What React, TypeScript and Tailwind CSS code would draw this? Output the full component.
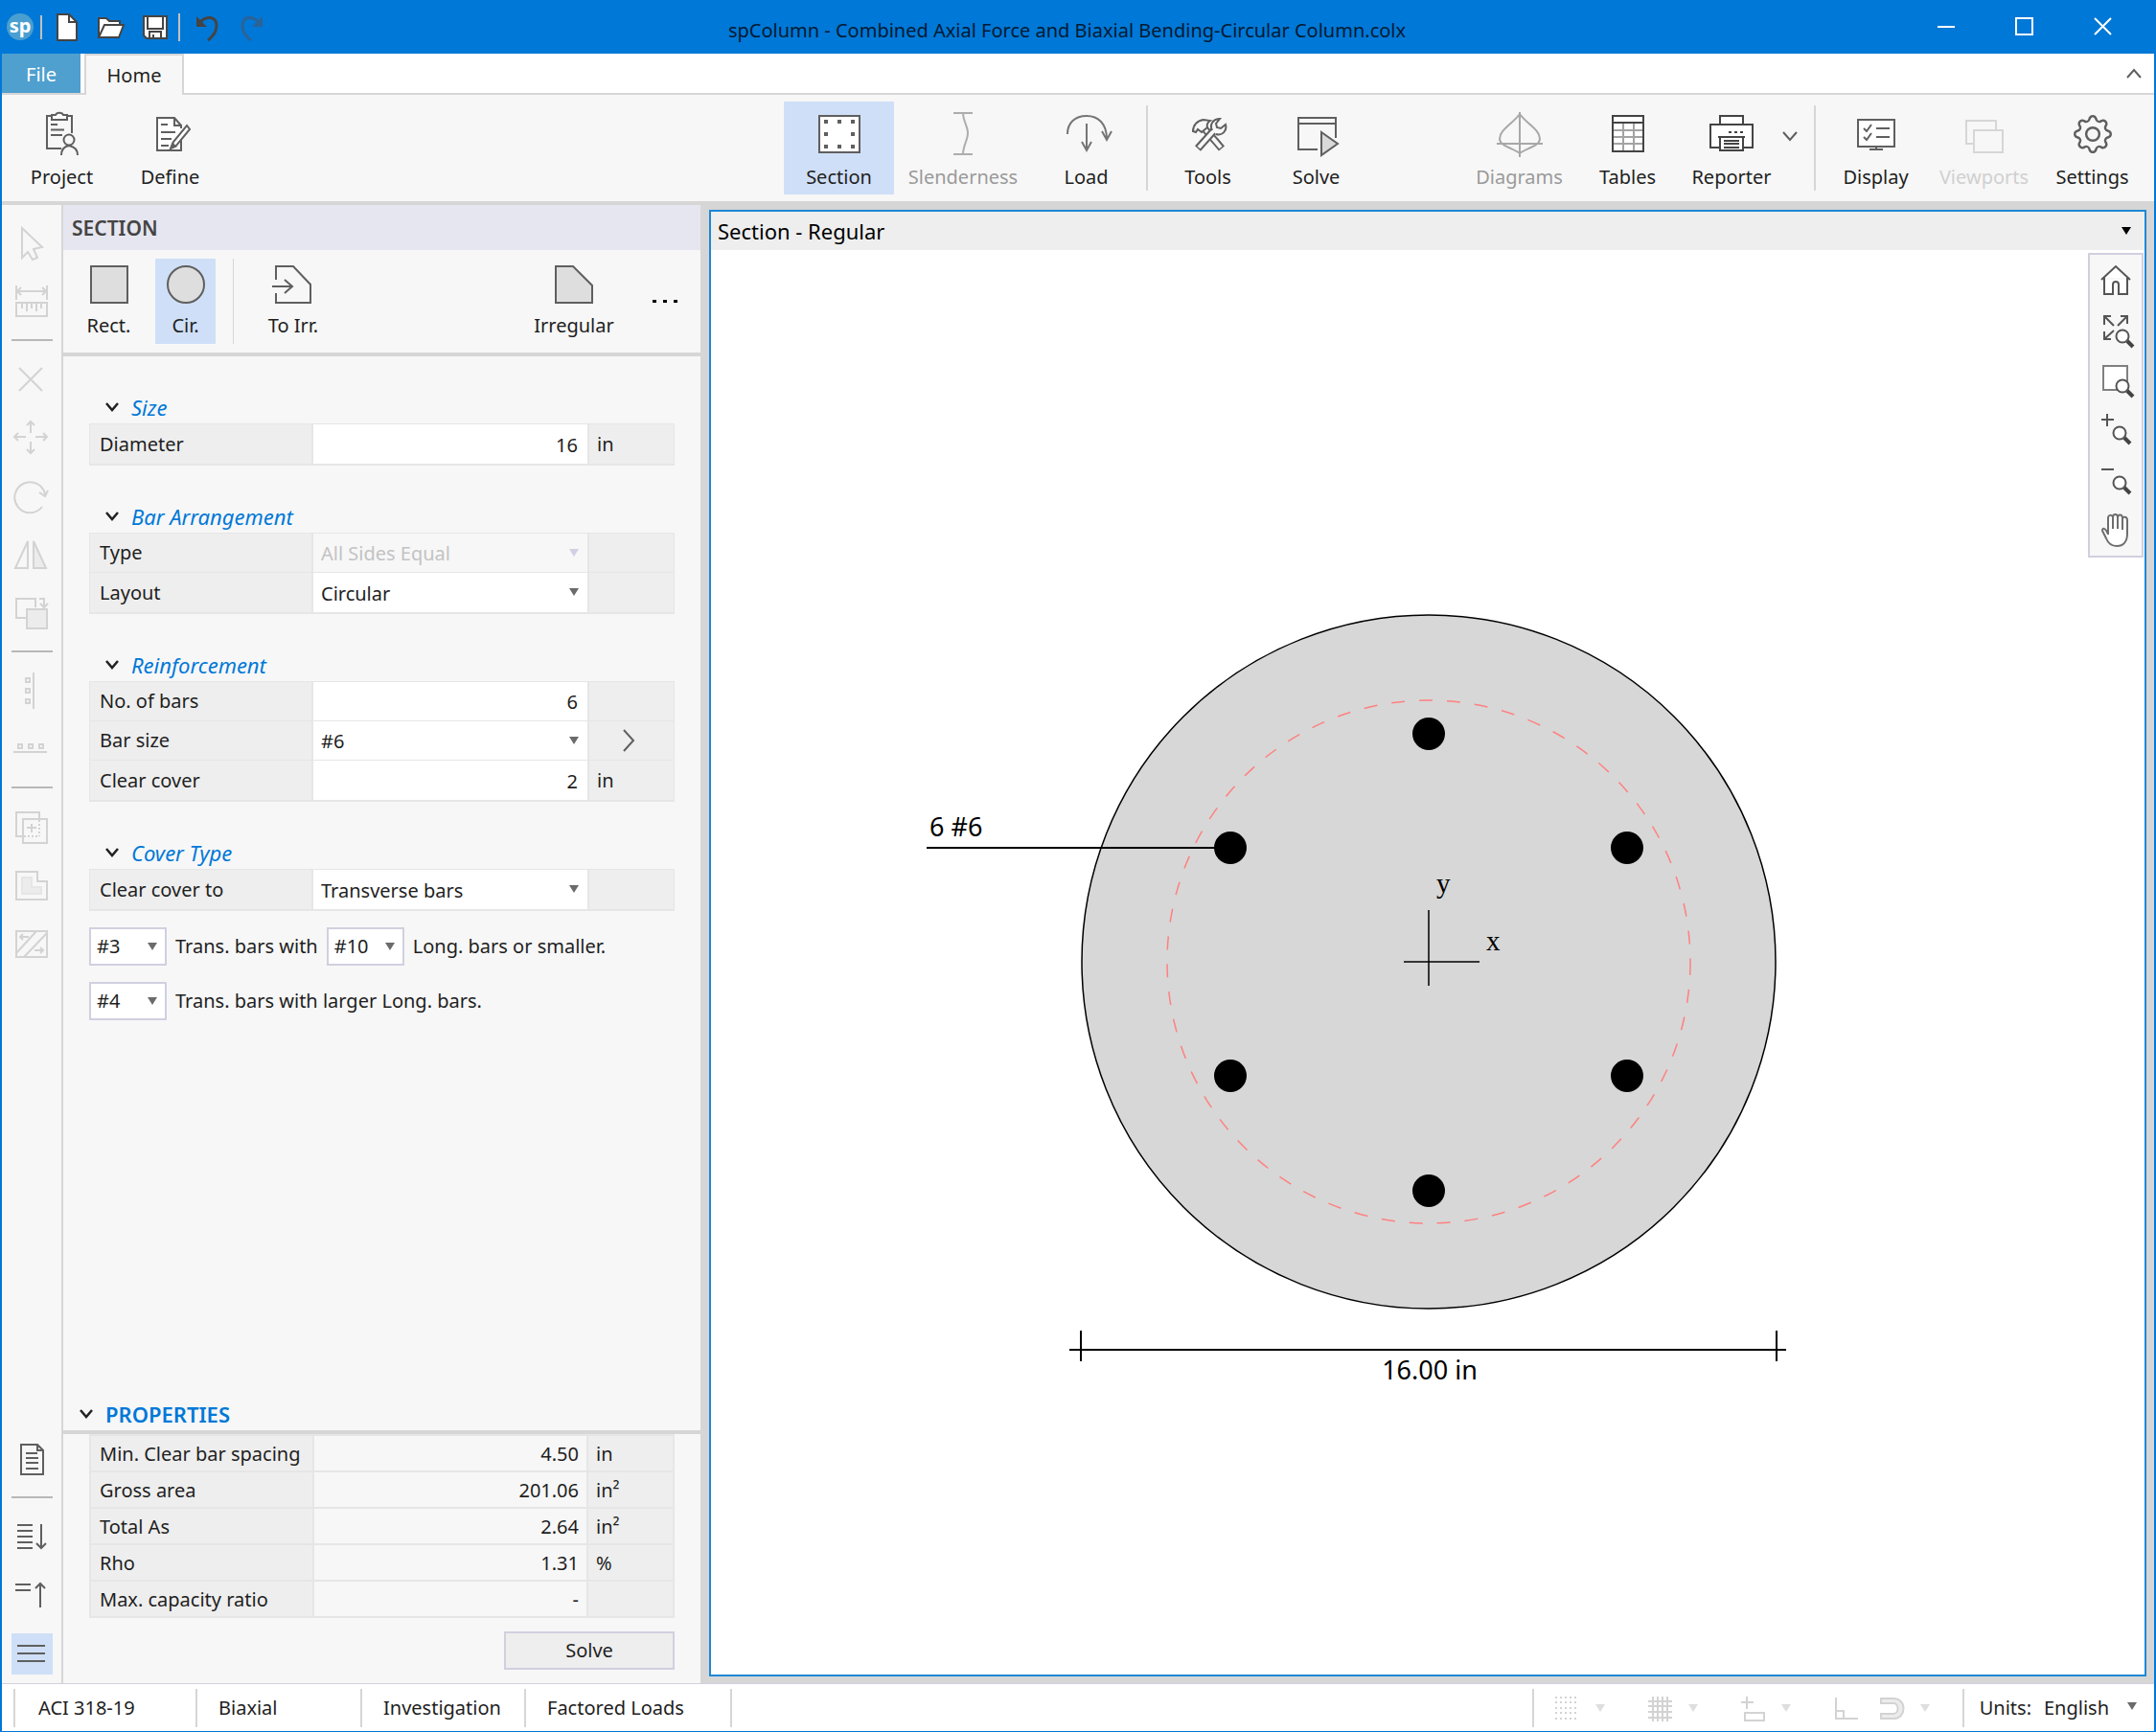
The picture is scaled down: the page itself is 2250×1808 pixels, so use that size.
import { useState } from "react";
import type { ReactNode } from "react";
import { BsGear } from "react-icons/bs";

interface IconProps {
  children: ReactNode;
  color?: string;
  size?: number;
}

function Icon({ children, color = "#5f5f5f", size = 48 }: IconProps) {
  return (
    <svg
      width={size}
      height={size}
      viewBox={`0 0 ${size} ${size}`}
      fill="none"
      stroke={color}
      strokeWidth="2"
      className="shrink-0 overflow-visible"
      aria-hidden="true"
    >
      {children}
    </svg>
  );
}

function Chevron() {
  return (
    <svg width="16" height="16" viewBox="0 0 16 16" fill="none" stroke="#222" strokeWidth="2.500" aria-hidden="true">
      <path d="M2 4l6 7 6-7" />
    </svg>
  );
}

function Caret({ className }: { className: string }) {
  return (
    <svg width="10" height="8" viewBox="0 0 10 8" className={className} aria-hidden="true">
      <path d="M0 0h10L5 8z" fill="currentColor" />
    </svg>
  );
}

const ribbon = {
  project: (
    <Icon>
      <path d="M13 5H8v34h15M29 5h5v18" />
      <path d="M13 9V4h4c1-3 7-3 8 0h4v5z" fill="#fff" />
      <path d="M12 14h7M12 19.500h14M12 25h12" />
      <circle cx="31" cy="30" r="5.500" />
      <path d="M23 46c0-6 3-9 8-10 5 1 9 4 9 10" />
    </Icon>
  ),
  define: (
    <Icon>
      <path d="M35 27v14H10V7h18l7 8v3M28 7v8h7" fill="#fff" />
      <path d="M14 14h7M14 22h15M14 29h11M14 36h8" />
      <path d="M41 15l3 4-14 17-5 2 2-6z" fill="#fff" />
      <path d="M24 39l5-2-3-3z" fill="#5f5f5f" />
    </Icon>
  ),
  section: (
    <Icon>
      <path d="M3 5h42v38H3z" fill="#fff" />
      <path d="M8 11h4M22 11h4M36 11h4M8 24h4M36 24h4M8 37h4M22 37h4M36 37h4" strokeWidth="4" />
    </Icon>
  ),
  slenderness: (
    <Icon color="#adadad">
      <path d="M14 2h20M14 45h20M24 2c0 8 5 14 5 21s-5 13-5 22" />
    </Icon>
  ),
  load: (
    <Icon color="#757575">
      <path d="M4 24C4 12 12 5 24 5s21 8 21 24M24 13v27M19 32l5 9 5-9M40 21l5 9 5-9" />
    </Icon>
  ),
  tools: (
    <Icon>
      <path d="M19 17l19 22" strokeWidth="8" />
      <path d="M19 17l18 21" strokeWidth="4" stroke="#f7f7f7" />
      <path d="M8 21c0-6 4-11 11-12l7 1c-3 2-4 4-3 7l-6 5-4-3-2 3z" fill="#f7f7f7" />
      <path d="M31 19L13 39" strokeWidth="8" />
      <path d="M31 19L14 38" strokeWidth="4" stroke="#f7f7f7" />
      <path d="M28 20c-3-6 1-12 8-12l-4 5 1 4 4 1 5-4c2 7-4 12-10 10" fill="#f7f7f7" />
    </Icon>
  ),
  solve: (
    <Icon>
      <path d="M25 40H5V7h39v21M5 13h39" />
      <path d="M29 22l17 12-17 12z" fill="#d9d9d9" />
    </Icon>
  ),
  diagrams: (
    <Icon color="#a8a8a8">
      <path d="M24 3C17 13 3 19 3 29c0 7 14 10 21 15 7-5 21-8 21-15C45 19 31 13 24 3M24 1v47M0 34h48" />
    </Icon>
  ),
  tables: (
    <Icon>
      <path d="M8 5h32v37H8z" fill="#fff" />
      <path d="M19 13v28M30 13v28M9 20h30M9 27h30M9 34h30" stroke="#a3a3a3" />
      <path d="M8 5h32v37H8zM8 12h32" stroke="#444" />
    </Icon>
  ),
  reporter: (
    <Icon color="#444">
      <path d="M12 13V5h24v8" fill="#fff" />
      <path d="M12 38H2V14h44v24H36" fill="#fff" />
      <path d="M12 27v14h24V27M10 27h28M16 31h16M16 34h16M16 38h16" />
      <path d="M21 22h3M27 22h3M33 22h3" />
    </Icon>
  ),
  display: (
    <Icon>
      <path d="M5 9h38v28H5z" fill="#fff" />
      <path d="M24 37v3M17 40h14M24 18h14M24 27h14M11 18l3 3 5-7M11 27l3 3 5-7" />
    </Icon>
  ),
  viewports: (
    <Icon color="#d6d6d6">
      <path d="M13 34H5V10h31v10" />
      <path d="M13 20h30v23H13z" />
    </Icon>
  ),
  settings: <BsGear className="m-1 size-10 text-[#5f5f5f]" aria-hidden="true" />,
};

interface RibbonButtonProps {
  icon: ReactNode;
  label: string;
  width?: string;
  tone?: string;
  active?: boolean;
  disabled?: boolean;
}

function RibbonButton({ icon, label, width = "w-[113px]", tone = "text-[#1e1e1e]", active, disabled }: RibbonButtonProps) {
  return (
    <button
      type="button"
      disabled={disabled}
      className={`flex h-[97px] shrink-0 flex-col items-center gap-[7px] pt-2.5 ${width} ${tone} ${active ? "bg-[#cfdff7]" : ""}`}
    >
      {icon}
      <span>{label}</span>
    </button>
  );
}

function RibbonDivider({ className = "mx-1.5" }: { className?: string }) {
  return <span className={`mt-1 h-[89px] w-0.5 shrink-0 bg-[#d6d6d6] ${className}`} />;
}

const editTools: { label: string; icon?: ReactNode }[] = [
  { label: "Select", icon: <path d="M12 6v31l6-6 5 8 5-2-4-9 9-2z" /> },
  {
    label: "Measure",
    icon: <path d="M6 5v15M38 5v15M6 11h32M11 7l-4 4 4 4M33 7l4 4-4 4M6 23h32v14H6zM12 23v6M17 23v9M22 23v6M27 23v9M32 23v6" />,
  },
  { label: "divider-1" },
  { label: "Delete", icon: <path d="M9 10l24 24M33 10L9 34" /> },
  {
    label: "Move",
    icon: <path d="M21 17V5M21 26v12M16 21H4M26 21h12M17 9l4-4 4 4M17 34l4 4 4-4M8 17l-4 4 4 4M34 17l4 4-4 4" />,
  },
  { label: "Rotate", icon: <path d="M33 33A16 16 0 1 1 36 20M30 18l6 4 3-6" /> },
  {
    label: "Mirror",
    icon: (
      <>
        <path d="M18 8v28H5z" />
        <path d="M24 8v28h13z" fill="#ececec" />
      </>
    ),
  },
  {
    label: "Duplicate",
    icon: (
      <>
        <path d="M16 27H6V7h20v9M30 7h5v9M31 12l4 4 4-4" />
        <path d="M17 18h21v20H17z" fill="#ececec" />
      </>
    ),
  },
  { label: "divider-2" },
  { label: "Align vertical", icon: <path d="M24 3v38M16 9h4v4h-4zM16 20h4v4h-4zM16 31h4v4h-4z" /> },
  { label: "Align horizontal", icon: <path d="M3 25h35M8 17h4v4H8zM19 17h4v4h-4zM30 17h4v4h-4z" /> },
  { label: "divider-3" },
  {
    label: "Merge",
    icon: (
      <>
        <path d="M13 32H6V7h24v7M13 14h25v25H13zM22 19v9M17 23h10" />
        <path d="M30 15v17M14 32h16" strokeDasharray="2 2" />
      </>
    ),
  },
  {
    label: "Offset",
    icon: (
      <>
        <path d="M6 8h22v10h10v19H6z" />
        <path d="M12 14h10v10h10v7H12z" fill="#ececec" stroke="#e6e6e6" />
      </>
    ),
  },
  { label: "Trim", icon: <path d="M6 9h32v27H6zM6 32L27 9M14 36L38 11M10 15h9M13 12l-3 3 3 3M25 29h9M31 26l3 3-3 3" /> },
];

const viewTools = [
  { label: "Report", icon: <path d="M11 7h17l6 6v25H11zM28 7v6h6M16 16h12M16 21h13M16 26h13M16 32h13" /> },
  { label: "divider-4" },
  { label: "Expand list", icon: <path d="M7 10h16M7 16h16M7 22h16M7 28h16M7 34h16M32 9v25M27 29l5 5 5-5" /> },
  { label: "Collapse list", icon: <path d="M5 11h16M5 17h16M31 35V10M26 15l5-5 5 5" /> },
];

function SideButton({ label, icon, disabled }: { label: string; icon?: ReactNode; disabled?: boolean }) {
  if (!icon) return <span className="my-[9px] h-0.5 w-[43px] bg-[#b8b8b8]" />;
  return (
    <button type="button" aria-label={label} disabled={disabled} className="flex h-[61px] w-[43px] items-center justify-center">
      <Icon size={44} color={disabled ? "#d3d3d3" : "#5f5f5f"}>
        {icon}
      </Icon>
    </button>
  );
}

function Group({ title, children }: { title: string; children: ReactNode }) {
  const [open, setOpen] = useState(true);
  return (
    <section className="pt-9">
      <button
        type="button"
        aria-expanded={open}
        onClick={() => setOpen(!open)}
        className="flex h-[34px] items-center gap-3 pl-4 text-[22px] text-[#0078d7] italic"
      >
        <Chevron />
        {title}
      </button>
      {open && <div className="border border-b-2 border-[#e6e6e6]">{children}</div>}
    </section>
  );
}

interface RowProps {
  id: string;
  label: string;
  unit?: ReactNode;
  children: ReactNode;
}

function Row({ id, label, unit, children }: RowProps) {
  return (
    <div className="grid h-[41px] grid-cols-[233px_1fr_90px] border-b border-[#e6e6e6] bg-[#eeeeee] last:border-b-0">
      <label htmlFor={id} className="flex items-center border-r-2 border-[#e6e6e6] pl-2.5">
        {label}
      </label>
      {children}
      <div className="flex items-center border-l-2 border-[#e6e6e6] pl-2">{unit}</div>
    </div>
  );
}

function NumberBox({ id, value }: { id: string; value: string }) {
  return <input id={id} type="text" defaultValue={value} className="w-full min-w-0 bg-white pt-0.5 pr-2.5 text-right outline-none" />;
}

function SelectBox({ id, value, disabled }: { id: string; value: string; disabled?: boolean }) {
  return (
    <div className="relative">
      <select
        id={id}
        defaultValue={value}
        disabled={disabled}
        className="h-full w-full appearance-none bg-white pt-0.5 pl-2 outline-none disabled:bg-[#f7f7f7] disabled:text-[#c3c3c3] disabled:opacity-100"
      >
        <option>{value}</option>
      </select>
      <Caret className={`pointer-events-none absolute top-4 right-[9px] ${disabled ? "text-[#d0d0e4]" : "text-[#6b6b6b]"}`} />
    </div>
  );
}

function SmallSelect({ label, value }: { label: string; value: string }) {
  return (
    <div className="relative h-10 w-[81px] shrink-0 border-2 border-[#d0d0e0]">
      <select aria-label={label} defaultValue={value} className="h-full w-full appearance-none bg-white pl-1.5 outline-none">
        <option>{value}</option>
      </select>
      <Caret className="pointer-events-none absolute top-3.5 right-2 text-[#6b6b6b]" />
    </div>
  );
}

const properties: { name: string; value: string; unit: ReactNode }[] = [
  { name: "Min. Clear bar spacing", value: "4.50", unit: "in" },
  { name: "Gross area", value: "201.06", unit: "in²" },
  { name: "Total As", value: "2.64", unit: "in²" },
  { name: "Rho", value: "1.31", unit: "%" },
  { name: "Max. capacity ratio", value: "-", unit: "" },
];

function SectionPanel() {
  return (
    <aside className="flex w-[665px] shrink-0 flex-col bg-[#f7f7f7]">
      <h2 className="flex h-[47px] shrink-0 items-center bg-[#e6e6f0] pl-[9px] text-[21px] font-semibold text-[#444]">SECTION</h2>
      <div className="flex h-[111px] shrink-0 items-start border-b-4 border-[#d6d6d6] pt-[9px] pl-4">
        <button type="button" className="flex h-[89px] w-[63px] flex-col items-center gap-[9px] pt-[7px]">
          <Icon size={40}>
            <path d="M1 1h38v38H1z" fill="#dedede" />
          </Icon>
          Rect.
        </button>
        <button type="button" className="ml-[17px] flex h-[89px] w-[63px] flex-col items-center gap-[9px] bg-[#cfdff7] pt-[7px]">
          <Icon size={40}>
            <circle cx="20" cy="20" r="19" fill="#dedede" />
          </Icon>
          Cir.
        </button>
        <span className="ml-[18px] h-[89px] w-px bg-[#d6d6d6]" />
        <button type="button" className="ml-6 flex h-[89px] w-[76px] flex-col items-center gap-[9px] pt-[7px]">
          <Icon size={40}>
            <path d="M2 15V1h18l18 19v19H2V29M-2 22h21M11 15l8 7-8 7" />
          </Icon>
          To Irr.
        </button>
        <button type="button" className="mr-[33px] ml-auto flex h-[89px] w-[90px] flex-col items-center gap-[9px] pt-[7px]">
          <Icon size={40}>
            <path d="M1 1h18l20 20v18H1z" fill="#dedede" />
          </Icon>
          Irregular
        </button>
        <button type="button" aria-label="More shapes" className="mr-5 flex h-[88px] items-center gap-[7px] px-1">
          <span className="h-[3px] w-1 bg-black" />
          <span className="h-[3px] w-1 bg-black" />
          <span className="h-[3px] w-1 bg-black" />
        </button>
      </div>

      <form className="flex-1 px-[27px]" onSubmit={(e) => e.preventDefault()}>
        <Group title="Size">
          <Row id="diameter" label="Diameter" unit="in">
            <NumberBox id="diameter" value="16" />
          </Row>
        </Group>
        <Group title="Bar Arrangement">
          <Row id="type" label="Type">
            <SelectBox id="type" value="All Sides Equal" disabled />
          </Row>
          <Row id="layout" label="Layout">
            <SelectBox id="layout" value="Circular" />
          </Row>
        </Group>
        <Group title="Reinforcement">
          <Row id="bars" label="No. of bars">
            <NumberBox id="bars" value="6" />
          </Row>
          <Row
            id="barsize"
            label="Bar size"
            unit={
              <button type="button" aria-label="Bar size details" className="ml-6">
                <Icon size={24}>
                  <path d="M4 1l10 11L4 23" />
                </Icon>
              </button>
            }
          >
            <SelectBox id="barsize" value="#6" />
          </Row>
          <Row id="cover" label="Clear cover" unit="in">
            <NumberBox id="cover" value="2" />
          </Row>
        </Group>
        <Group title="Cover Type">
          <Row id="coverto" label="Clear cover to">
            <SelectBox id="coverto" value="Transverse bars" />
          </Row>
        </Group>
        <div className="mt-[17px] flex items-center gap-[9px]">
          <SmallSelect label="Transverse bar size" value="#3" />
          <span>Trans. bars with</span>
          <SmallSelect label="Longitudinal bar size" value="#10" />
          <span>Long. bars or smaller.</span>
        </div>
        <div className="mt-[17px] flex items-center gap-[9px]">
          <SmallSelect label="Transverse bar size for larger bars" value="#4" />
          <span>Trans. bars with larger Long. bars.</span>
        </div>
      </form>

      <button
        type="button"
        aria-expanded="true"
        className="flex h-[38px] shrink-0 items-center gap-3 border-b-4 border-[#d6d6d6] pl-4 text-[22px] font-semibold text-[#0078d7]"
      >
        <Chevron />
        PROPERTIES
      </button>
      <div className="px-[27px] pb-[14px]">
        <table className="w-full table-fixed border-collapse">
          <tbody>
            {properties.map((p) => (
              <tr key={p.name} className="h-[38px]">
                <th scope="row" className="w-[233px] border-2 border-[#e6e6e6] bg-[#eeeeee] pt-0.5 pl-[9px] text-left font-normal whitespace-nowrap">
                  {p.name}
                </th>
                <td className="border-2 border-[#e6e6e6] pt-0.5 pr-2 text-right">{p.value}</td>
                <td className="w-[90px] border-2 border-[#e6e6e6] bg-[#eeeeee] pt-0.5 pl-2">{p.unit}</td>
              </tr>
            ))}
          </tbody>
        </table>
        <button type="button" className="mt-[14px] ml-auto block h-10 w-[178px] border-2 border-[#d0d0e0] bg-[#eeeeee]">
          Solve
        </button>
      </div>
    </aside>
  );
}

const bars = [
  [749, 505],
  [956, 624],
  [956, 862],
  [749, 982],
  [542, 862],
  [542, 624],
];

function SectionDrawing() {
  return (
    <svg viewBox="0 0 1496 1487" className="h-full w-full" role="img" aria-label="Circular column section">
      <circle cx="749" cy="743" r="362" fill="#d7d7d7" stroke="#000" strokeWidth="1.500" />
      <circle cx="749" cy="743" r="273" fill="none" stroke="#ff8080" strokeWidth="1.500" strokeDasharray="14 15" />
      {bars.map(([x, y]) => (
        <circle key={`${x}-${y}`} cx={x} cy={y} r="17" />
      ))}
      <path d="M225 624h317M374 1148h748M386 1128v32M1112 1128v32" stroke="#000" strokeWidth="2" />
      <path d="M723 743h79M749 689v79" stroke="#000" strokeWidth="1.500" />
      <text x="228" y="612" fontSize="27">
        6 #6
      </text>
      <text x="750" y="1179" fontSize="27" textAnchor="middle">
        16.00 in
      </text>
      <g className="font-['Liberation_Serif',serif]" fontSize="29">
        <text x="757" y="671">
          y
        </text>
        <text x="809" y="731">
          x
        </text>
      </g>
    </svg>
  );
}

// magnifier shared by the zoom buttons, its lens centred on (x, y)
function Lens({ x, y }: { x: number; y: number }) {
  return (
    <g transform={`translate(${x} ${y})`}>
      <circle r="6.500" fill="#fff" />
      <path d="M5 5l6 6" strokeWidth="4" stroke="#444" />
    </g>
  );
}

const zoomTools = [
  { label: "Home", icon: <path d="M2 17L17 3l15 14M5 15v17h9V22c0-4 6-4 6 0v10h9V15" fill="#fff" /> },
  {
    label: "Zoom extents",
    icon: (
      <>
        <path d="M5 12V3h7M5 3l10 10M22 3h7v8M29 3L19 13M5 19v8h7M5 27l10-9" />
        <Lens x={24} y={24} />
      </>
    ),
  },
  {
    label: "Zoom window",
    icon: (
      <>
        <path d="M4 3h25v25H4z" fill="#fff" stroke="#808080" />
        <Lens x={24} y={24} />
      </>
    ),
  },
  {
    label: "Zoom in",
    icon: (
      <>
        <path d="M2 7h13M8 1v13" />
        <Lens x={21} y={21} />
      </>
    ),
  },
  {
    label: "Zoom out",
    icon: (
      <>
        <path d="M2 7h13" />
        <Lens x={21} y={21} />
      </>
    ),
  },
  {
    label: "Pan",
    icon: (
      <>
        <path
          d="M9 23V6c0-4 4-4 5-1 0-4 5-4 5 0 1-4 5-3 5 1 1-2 5-2 5 2v14c0 8-4 13-11 13-6 0-9-3-11-8l-4-8c0-3 3-4 6 4z"
          fill="#fff"
          stroke="#6e6e6e"
        />
        <path d="M14 5v12M19 5v12M24 6v12" stroke="#6e6e6e" />
      </>
    ),
  },
];

function Canvas() {
  return (
    <main className="flex min-w-0 flex-1 flex-col border-2 border-[#1e88d6] bg-white">
      <header className="flex h-10 shrink-0 items-center justify-between bg-[#eeeeee] pr-3.5 pl-[7px] text-[22px] text-black">
        Section - Regular
        <button type="button" aria-label="View options">
          <Caret className="text-black" />
        </button>
      </header>
      <div className="relative min-h-0 flex-1">
        <SectionDrawing />
        <div className="absolute top-[3px] right-px flex w-[58px] flex-col items-center border-2 border-[#d0d0e0] bg-[#f7f7f7] pr-px pb-0.5">
          {zoomTools.map((t) => (
            <button key={t.label} type="button" aria-label={t.label} className="flex h-[52px] items-center justify-center">
              <Icon size={34} color="#555">
                {t.icon}
              </Icon>
            </button>
          ))}
        </div>
      </div>
    </main>
  );
}

function TitleBar() {
  return (
    <header className="flex h-14 shrink-0 items-center bg-[#0078d7]">
      <div className="flex flex-1 items-center pl-[5px]">
        <span className="flex size-7 items-center justify-center rounded-full bg-[#4a9fd0] pb-0.5 font-bold text-white">sp</span>
        <span className="ml-[7px] h-[25px] w-0.5 bg-[#c0c0c0]" />
        <button type="button" aria-label="New" className="ml-3">
          <Icon size={30} color="#444">
            <path d="M4 2h12l8 8v19H4z" fill="#fff" />
            <path d="M16 2v8h8" />
          </Icon>
        </button>
        <button type="button" aria-label="Open" className="ml-3.5">
          <Icon size={30} color="#444">
            <path d="M3 25V6h8l3 3h11v4" fill="#fff" />
            <path d="M3 26l6-13h20l-5 13z" fill="#fff" />
          </Icon>
        </button>
        <button type="button" aria-label="Save" className="ml-4">
          <Icon size={30} color="#444">
            <path d="M4 4h24v23H7l-3-3z" fill="#fff" />
            <path d="M8 4v13h16V4M10 27v-7h12v7M14 27v-4" />
          </Icon>
        </button>
        <span className="ml-2.5 h-[29px] w-0.5 bg-[#c0c0c0]" />
        <button type="button" aria-label="Undo" className="ml-3.5">
          <Icon size={30} color="#444">
            <path d="M5 12C13 2 24 4 24 14c0 7-5 12-9 15" strokeWidth="3" />
            <path d="M3 4v11h11z" fill="#444" stroke="none" />
          </Icon>
        </button>
        <button type="button" aria-label="Redo" disabled className="ml-4">
          <Icon size={30} color="#2a6397">
            <path d="M24 12C16 2 5 4 5 14c0 7 5 12 9 15" strokeWidth="3" />
            <path d="M26 4v11H15z" fill="#2a6397" stroke="none" />
          </Icon>
        </button>
      </div>
      <h1 className="pt-2 pr-4 text-[#001a33]">spColumn - Combined Axial Force and Biaxial Bending-Circular Column.colx</h1>
      <div className="flex flex-1 justify-end pr-3">
        <button type="button" aria-label="Minimize" className="flex w-[82px] justify-center">
          <Icon size={20} color="#fff">
            <path d="M1 10h18" />
          </Icon>
        </button>
        <button type="button" aria-label="Maximize" className="flex w-[82px] justify-center">
          <Icon size={20} color="#fff">
            <path d="M1 1h17v17H1z" />
          </Icon>
        </button>
        <button type="button" aria-label="Close" className="flex w-[82px] justify-center">
          <Icon size={20} color="#fff">
            <path d="M1 1l17 17M18 1L1 18" />
          </Icon>
        </button>
      </div>
    </header>
  );
}

function Ribbon() {
  return (
    <>
      <nav className="flex h-[41px] shrink-0 items-stretch bg-white">
        <button type="button" className="w-[82px] bg-[#4f9fcf] pt-0.5 text-white">
          File
        </button>
        <button type="button" className="relative z-10 -mb-0.5 ml-1 w-[104px] border-2 border-b-0 border-[#d6d6d6] bg-[#f7f7f7]">
          Home
        </button>
        <button type="button" aria-label="Collapse ribbon" className="mr-3 ml-auto">
          <Icon size={18}>
            <path d="M2 13l7-8 7 8" />
          </Icon>
        </button>
      </nav>
      <div className="flex h-[117px] shrink-0 border-t-2 border-b-4 border-[#d6d6d6] bg-[#f7f7f7] pt-[7px]">
        <div className="flex flex-1 pl-1.5">
          <RibbonButton icon={ribbon.project} label="Project" />
          <RibbonButton icon={ribbon.define} label="Define" />
        </div>
        <div className="flex">
          <RibbonButton icon={ribbon.section} label="Section" width="w-[115px]" active />
          <RibbonButton icon={ribbon.slenderness} label="Slenderness" width="w-36" tone="text-[#9a9a9a]" disabled />
          <RibbonButton icon={ribbon.load} label="Load" />
          <RibbonDivider />
          <RibbonButton icon={ribbon.tools} label="Tools" />
          <RibbonButton icon={ribbon.solve} label="Solve" />
        </div>
        <div className="flex flex-1 justify-end pr-2">
          <RibbonButton icon={ribbon.diagrams} label="Diagrams" tone="text-[#9a9a9a]" disabled />
          <RibbonButton icon={ribbon.tables} label="Tables" />
          <RibbonButton icon={ribbon.reporter} label="Reporter" width="w-[104px]" />
          <button type="button" aria-label="Reporter options" className="h-[72px]">
            <Icon size={18}>
              <path d="M2 5l7 8 7-8" />
            </Icon>
          </button>
          <RibbonDivider className="mr-1.5 ml-4" />
          <RibbonButton icon={ribbon.display} label="Display" />
          <RibbonButton icon={ribbon.viewports} label="Viewports" tone="text-[#d0d0d0]" disabled />
          <RibbonButton icon={ribbon.settings} label="Settings" />
        </div>
      </div>
    </>
  );
}

const gridTools = [
  { label: "Grid", icon: <path d="M0 4h24M0 9h24M0 15h24M0 20h24M0 26h24" strokeDasharray="2 3" /> },
  { label: "Snap grid", icon: <path d="M0 8h25M0 13h25M0 19h25M0 25h25M5 3v26M10 3v26M15 3v26M20 3v26" /> },
  { label: "Coordinates", icon: <path d="M6 3v13M0 9h13M4 20h20v8H4z" /> },
];

function StatusBar() {
  return (
    <footer className="flex h-[50px] shrink-0 items-center border-t border-[#d0d0e0] bg-white pl-3">
      <span className="flex h-10 w-[190px] items-center border-l-2 border-[#d6d6d6] pl-6">ACI 318-19</span>
      <span className="flex h-10 w-[172px] items-center border-l-2 border-[#d6d6d6] pl-[22px]">Biaxial</span>
      <span className="flex h-10 w-[171px] items-center border-l-2 border-[#d6d6d6] pl-[22px]">Investigation</span>
      <span className="flex h-10 w-[217px] items-center border-x-2 border-[#d6d6d6] pl-[22px]">Factored Loads</span>
      <div className="ml-auto flex h-10 items-center border-l-2 border-[#d6d6d6] pl-[22px]">
        {gridTools.map((t) => (
          <button key={t.label} type="button" aria-label={t.label} disabled className="flex w-[97px] items-center gap-[18px]">
            <Icon size={30} color="#d3d3d3">
              {t.icon}
            </Icon>
            <Caret className="-ml-1.5 text-[#dedede]" />
          </button>
        ))}
        <button type="button" aria-label="Ortho" disabled className="w-12">
          <Icon size={30} color="#d3d3d3">
            <path d="M2 4v22h23M2 18h8v8" />
          </Icon>
        </button>
        <button type="button" aria-label="Object snap" disabled className="flex w-[86px] items-center gap-[18px]">
          <Icon size={30} color="#d3d3d3">
            <path d="M1 5h13c14 0 14 21 0 21H1v-5h13c6 0 6-11 0-11H1z" fill="#ececec" />
          </Icon>
          <Caret className="-ml-1.5 text-[#dedede]" />
        </button>
      </div>
      <div className="flex h-10 items-center border-l-2 border-[#d6d6d6] pl-4">
        <label htmlFor="units">Units:</label>
        <div className="relative ml-[13px] h-10 w-[115px]">
          <select id="units" defaultValue="English" className="h-full w-full appearance-none bg-transparent outline-none">
            <option>English</option>
          </select>
          <Caret className="pointer-events-none absolute top-3.5 right-[18px] text-[#6b6b6b]" />
        </div>
      </div>
    </footer>
  );
}

export default function App() {
  return (
    <div className="flex h-screen flex-col border-x-2 border-b border-[#0078d7] bg-[#f7f7f7] font-['Noto_Sans','Open_Sans',sans-serif] text-[20px] leading-7 text-[#1e1e1e]">
      <TitleBar />
      <Ribbon />
      <div className="flex min-h-0 flex-1">
        <div className="flex w-[64px] shrink-0 flex-col items-center border-r-2 border-[#d6d6d6] pt-[9px]">
          {editTools.map((t) => (
            <SideButton key={t.label} label={t.label} icon={t.icon} disabled />
          ))}
          <div className="mt-auto flex flex-col items-center pb-[9px]">
            {viewTools.map((t) => (
              <SideButton key={t.label} label={t.label} icon={t.icon} />
            ))}
            <button type="button" aria-label="Toggle panel" className="mt-2.5 flex h-[43px] w-[43px] items-center justify-center bg-[#cfdff7]">
              <Icon size={44}>
                <path d="M7 13h29M7 21h29M7 29h29" />
              </Icon>
            </button>
          </div>
        </div>
        <SectionPanel />
        <div className="flex min-w-0 flex-1 bg-[#d6d6d6] pt-[5px] pr-2 pb-[7px] pl-[9px]">
          <Canvas />
        </div>
      </div>
      <StatusBar />
    </div>
  );
}
